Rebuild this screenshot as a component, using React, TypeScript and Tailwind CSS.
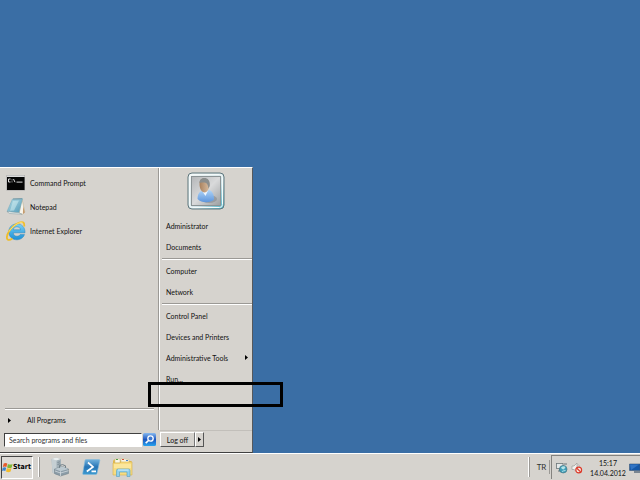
import { useState } from "react";

const places = [
  ["Administrator", "Documents"],
  ["Computer", "Network"],
  ["Control Panel", "Devices and Printers", "Administrative Tools", "Run..."],
];

function PromptIcon() {
  return (
    <svg className="h-5 w-5" viewBox="0 0 20 20">
      <rect x="0.5" y="2" width="18.5" height="15.5" fill="#a5a5a5" />
      <rect x="1" y="2.5" width="17.5" height="2" fill="#dcdcdc" />
      <rect x="1" y="4" width="17.5" height="13" fill="#050505" />
      <path d="M4.5 6H2.5v3h2M6 6.5v.8M6 8.500v.8M7.5 6l1.5 3.2M10.500 9.100h6" fill="none" stroke="#ddd" strokeWidth="1" />
    </svg>
  );
}

function NotepadIcon() {
  return (
    <svg className="h-5 w-5" viewBox="0 0 20 20">
      <defs>
        <linearGradient id="note" x1="0" y1="0" x2="1" y2="1">
          <stop offset="0" stopColor="#b9e0ea" />
          <stop offset="1" stopColor="#4d97b5" />
        </linearGradient>
      </defs>
      <path d="M16 2l2.8 13-2.6 2.5-3-1z" fill="#f7f4ec" stroke="#b4a683" strokeWidth="0.5" />
      <path d="M17.2 9l1.7 6.5-2 1.5z" fill="#c59a6c" />
      <path d="M6.5 2l10-.4-3.7 14.2L1 14.5z" fill="url(#note)" stroke="#6ba6ba" strokeWidth="0.5" />
      <path d="M1 14.5l11.8 1.3 3.3 1.4-12.5-.7z" fill="#e8f0f0" stroke="#81979c" strokeWidth="0.5" />
      <path d="M7 2l9-.3" stroke="#7c98a2" strokeWidth="1" />
      <path d="M7 4l6-.5-5 10-4 .2z" fill="#d8f1f4" opacity="0.5" />
    </svg>
  );
}

function ExplorerIcon() {
  return (
    <svg className="h-5 w-5" viewBox="0 0 20 20">
      <defs>
        <linearGradient id="ie" x1="0" y1="0" x2="0" y2="1">
          <stop offset="0" stopColor="#78d2f7" />
          <stop offset="1" stopColor="#1d8fd5" />
        </linearGradient>
      </defs>
      <path
        d="M19 11.8H7.2c.2 2.1 1.6 3.4 3.8 3.4 1.4 0 2.5-.5 3.200-1.600h4.300c-1.100 3.200-3.900 5.200-7.500 5.200-4.800 0-8.200-3.200-8.200-8S6.200 2.900 11 2.900c5 0 8.200 3.500 8 8.900zM7.300 8.800h7.200c-.2-1.800-1.600-3-3.600-3s-3.300 1.200-3.600 3z"
        fill="url(#ie)"
        stroke="#2385bd"
        strokeWidth="0.5"
      />
      <path
        d="M18.200 5.500c.3-2.200 0-3.600-1.200-4.200C14 0 7 4.400 3.400 9.700.6 14 0 18 2.200 18.800c1 .4 2.600-.1 4.200-1.200"
        fill="none"
        stroke="#efbd29"
        strokeWidth="1.800"
      />
      <path d="M16.500 1.300C12.500.900 6 5.700 3 10.600" fill="none" stroke="#ffe784" strokeWidth="0.800" />
    </svg>
  );
}

function Avatar() {
  return (
    <svg className="h-[38px] w-[38px]" viewBox="0 0 38 38">
      <defs>
        <linearGradient id="frame" x1="0" y1="0" x2="1" y2="1">
          <stop offset="0" stopColor="#f4f6f6" />
          <stop offset="0.6" stopColor="#d2e4e8" />
          <stop offset="1" stopColor="#49b3c8" />
        </linearGradient>
        <linearGradient id="back" x1="0" y1="0" x2="1" y2="1">
          <stop offset="0" stopColor="#b4b6b8" />
          <stop offset="0.5" stopColor="#d9dadb" />
          <stop offset="1" stopColor="#9c9fa1" />
        </linearGradient>
        <linearGradient id="shirt" x1="0" y1="0" x2="0" y2="1">
          <stop offset="0" stopColor="#b3d7f8" />
          <stop offset="1" stopColor="#5d95dc" />
        </linearGradient>
        <linearGradient id="face" x1="0" y1="0" x2="1" y2="0">
          <stop offset="0" stopColor="#a9815d" />
          <stop offset="1" stopColor="#d8bea2" />
        </linearGradient>
      </defs>
      <rect x="1" y="1" width="36" height="36" rx="4" fill="url(#frame)" stroke="#5f767c" strokeWidth="1" />
      <rect x="2.5" y="2.5" width="33" height="33" rx="3" fill="none" stroke="#f4fafa" strokeWidth="1" />
      <rect x="4.5" y="4.5" width="29" height="29" fill="url(#back)" stroke="#8b9395" strokeWidth="1" />
      <ellipse cx="22" cy="27" rx="8" ry="4" fill="#7c8187" opacity="0.5" />
      <path d="M10.500 27c0-5 2-8 6-9l5-.5c4 1.500 5.500 5 5.500 10-3 3.500-12.500 4-16.500-.5z" fill="url(#shirt)" />
      <path d="M14.500 18l4 6 3-6.500z" fill="#edf6ff" />
      <path d="M12.500 12c0-4 1.500-5.500 4.500-5.500s5.500 2 5.500 6-2 8-5 8-5-4-5-8.500z" fill="url(#face)" />
      <path d="M12.500 11c0-3.500 2-5 5-5s6 2.500 5.200 8l-1.200 2.500c-.5-3-1-4.500-2.500-5.500-2-.6-4-.4-6.500 0z" fill="#8b8e8d" />
    </svg>
  );
}

function SearchIcon() {
  return (
    <svg className="h-[13px] w-[13px]" viewBox="0 0 13 13">
      <defs>
        <linearGradient id="find" x1="0" y1="0" x2="0" y2="1">
          <stop offset="0" stopColor="#87b9ef" />
          <stop offset="0.5" stopColor="#1d56c0" />
          <stop offset="1" stopColor="#27a4ee" />
        </linearGradient>
      </defs>
      <rect width="13" height="13" rx="1.5" fill="url(#find)" />
      <circle cx="7.5" cy="5.5" r="2.7" fill="#3e78cf" stroke="#fff" strokeWidth="1.3" />
      <path d="M5.5 7.5L2.7 10.2" stroke="#fff" strokeWidth="1.7" />
    </svg>
  );
}

function WindowsLogo() {
  return (
    <svg className="h-[11px] w-[11px] shrink-0" viewBox="0 0 11 11">
      <path d="M1.7 1.6c1.3-.8 2.5-.8 3.6 0L4.400 5c-1.200-.7-2.400-.7-3.600 0z" fill="#e65b2b" />
      <path d="M5.900 2c1.500.8 2.900.8 4.700-.1L9.700 5.400c-1.500.9-3 .8-4.600 0z" fill="#80b637" />
      <path d="M.7 5.700c1.200-.7 2.400-.7 3.500 0L3.300 9C2.200 8.300 1.100 8.300 0 9z" fill="#3d83ca" />
      <path d="M4.900 6c1.500.8 3 .8 4.600 0L8.600 9.500c-1.500.9-3 .8-4.600 0z" fill="#f3bd2c" />
    </svg>
  );
}

function ServerIcon() {
  return (
    <svg className="h-5 w-5" viewBox="0 0 20 20">
      <path d="M1.500 2l4.500-1.500L11 2v14l-4.500 2-4-2.500z" fill="#a3b1b8" />
      <path d="M1.500 2l5 1.500V18l-4-2.500z" fill="#c5cfd3" />
      <path d="M1.500 2L6 .5 11 2 6.500 3.500z" fill="#eaeeee" />
      <path d="M7.500 5.500l2.500-.7M7.500 7.500l2.500-.7" stroke="#6b7d87" strokeWidth="0.7" />
      <path d="M4.500 12l8-2.500 6 2.500v4.500l-8 2.500-6-2.500z" fill="#8b9ca7" stroke="#687881" strokeWidth="0.5" />
      <path d="M4.500 12l8-2.500 6 2.500-8 2.300z" fill="#bcc9d0" />
      <path d="M9.500 10.800V8.500l3-.9 3 1.200v2" fill="none" stroke="#6d7d86" strokeWidth="1" />
      <path d="M5 14l5.500 2 8-2.300M10.500 14.300V19" fill="none" stroke="#dce3e6" strokeWidth="0.7" />
    </svg>
  );
}

function PowerShellIcon() {
  return (
    <svg className="h-5 w-5" viewBox="0 0 20 20">
      <defs>
        <linearGradient id="shell" x1="0" y1="0" x2="0" y2="1">
          <stop offset="0" stopColor="#72b2dd" />
          <stop offset="0.5" stopColor="#2674b5" />
          <stop offset="1" stopColor="#3d9bd1" />
        </linearGradient>
      </defs>
      <path d="M5 2.500h13q1 0 .8 1L16 16.500q-.3 1-1.300 1H2.500q-1 0-.8-1L4 3.500q.2-1 1-1z" fill="url(#shell)" stroke="#82b9da" strokeWidth="0.6" />
      <path d="M7 5.500l5 4.400-6.200 4.600M10.500 14.300H15" fill="none" stroke="#fff" strokeWidth="1.700" />
    </svg>
  );
}

function FolderIcon() {
  return (
    <svg className="h-[21px] w-[21px]" viewBox="0 0 21 21">
      <path d="M1 4l1-1.500h6L9 4h10.500v14H1z" fill="#e3b94a" />
      <path d="M3 2h5v4H3zM9 1.500l8 1V7H9z" fill="#faf7e8" stroke="#c9ba82" strokeWidth="0.5" />
      <path d="M4 2.500h2" stroke="#54a34b" strokeWidth="1.200" />
      <path d="M10 2.500h2" stroke="#d4543d" strokeWidth="1.200" />
      <path d="M14 3.500h2" stroke="#4984cb" strokeWidth="1.200" />
      <path d="M1 6h7l1-1h11v13H1z" fill="#f7dc82" stroke="#d9b34b" strokeWidth="0.6" />
      <path d="M2 8h17M2 10h17" stroke="#fff1b5" strokeWidth="1" />
      <path d="M4.500 19.500v-6q0-1.500 1.500-1.500h10.500q1.500 0 1.500 1.500v6h-3V15H7.500v4.500z" fill="#91d0ec" stroke="#539fc2" strokeWidth="0.6" />
      <path d="M6 13h10.500" stroke="#d5effb" strokeWidth="1" />
    </svg>
  );
}

function NetworkTrayIcon() {
  return (
    <svg className="h-3 w-3" viewBox="0 0 12 12">
      <rect x="0.5" y="1.5" width="6.5" height="5" fill="#e5e9e9" stroke="#6d7578" strokeWidth="0.8" />
      <path d="M2 9h4M3.500 7v2M8 2h3" stroke="#6d7578" strokeWidth="1" />
      <circle cx="7.2" cy="7.2" r="3.8" fill="#3f9fba" stroke="#47717c" strokeWidth="0.6" />
      <path d="M5 5.500q2.500-2 4.500-.5L8 7.500 6 7z" fill="#b5e4e7" />
      <path d="M6 9.500q2-1 3.500-1" stroke="#d0edf0" strokeWidth="0.8" fill="none" />
    </svg>
  );
}

function SoundTrayIcon() {
  return (
    <svg className="h-3 w-3" viewBox="0 0 12 12">
      <path d="M1 4h2l3-3v9L3 7.500H1z" fill="#f1f1ef" stroke="#999b9a" strokeWidth="0.7" />
      <path d="M7.500 2.500q1 1 1 2" fill="none" stroke="#a3a5a4" strokeWidth="0.7" />
      <circle cx="7.700" cy="8" r="2.900" fill="#f7e8e2" stroke="#dc3828" strokeWidth="1.200" />
      <path d="M5.800 6.200l3.800 3.700" stroke="#dc3828" strokeWidth="1.200" />
    </svg>
  );
}

function ScreenTrayIcon() {
  return (
    <svg className="h-[11px] w-[11px] shrink-0" viewBox="0 0 11 11">
      <path d="M.5 2h10.500v6.500H.5z" fill="#1558a8" stroke="#3a5878" strokeWidth="0.6" />
      <path d="M1 2.500h9L2 8z" fill="#3174c4" />
      <path d="M5 10h6" stroke="#3b5269" strokeWidth="1.200" />
    </svg>
  );
}

function Arrow() {
  return (
    <svg className="h-[5px] w-[3px]" viewBox="0 0 3 5">
      <path d="M0 0l3 2.500L0 5z" fill="#000" />
    </svg>
  );
}

const programs = [
  { name: "Command Prompt", icon: <PromptIcon /> },
  { name: "Notepad", icon: <NotepadIcon /> },
  { name: "Internet Explorer", icon: <ExplorerIcon /> },
];

const quickLaunch = [
  { name: "Server Manager", icon: <ServerIcon /> },
  { name: "Windows PowerShell", icon: <PowerShellIcon /> },
  { name: "Windows Explorer", icon: <FolderIcon /> },
];

export default function App() {
  const [query, setQuery] = useState("");

  return (
    <div className="flex min-h-screen flex-col bg-[#3a6ea5] font-['Lato','DejaVu_Sans_Condensed',sans-serif] text-[7px] leading-[10px] text-[#111]">
      <main className="flex flex-1 items-end">
        {/* Start menu */}
        <div className="relative w-[253px] border-t border-r border-b border-t-white border-r-[#55585c] border-b-[#404040] bg-[#d6d3ce]">
          <div className="flex">
            <div className="flex w-[159px] flex-col border-r border-[#9b9995] pt-[3px]">
              {programs.map((program) => (
                <button key={program.name} className="flex h-6 items-center gap-1 pl-[6px] text-left">
                  {program.icon}
                  {program.name}
                </button>
              ))}
              <div className="mt-auto mr-1 ml-[5px] border-t border-b border-t-[#9b9995] border-b-white" />
              <button className="flex h-5 items-center gap-4 pl-2 text-left">
                <Arrow />
                All Programs
              </button>
            </div>

            <nav className="flex flex-1 flex-col border-l border-white pb-[41px]">
              <div className="flex h-[47px] justify-center pt-1">
                <Avatar />
              </div>
              {places.map((group, index) => (
                <div key={index}>
                  {index > 0 && (
                    <div className="mt-px ml-[2px] border-t border-b border-t-[#9b9995] border-b-white" />
                  )}
                  {group.map((place) => (
                    <button key={place} className="flex h-[21px] w-full items-center justify-between pr-1 pl-[6px] text-left">
                      {place}
                      {place === "Administrative Tools" && <Arrow />}
                    </button>
                  ))}
                </div>
              ))}
            </nav>
          </div>

          <div className="flex items-start pb-[5px] pl-1">
            <form className="flex w-[156px] items-start gap-px pt-[3px]" onSubmit={(e) => e.preventDefault()}>
              <input
                type="text"
                aria-label="Search programs and files"
                placeholder="Search programs and files"
                value={query}
                onChange={(e) => setQuery(e.target.value)}
                className="h-[14px] w-[138px] border border-t-[#404040] border-r-white border-b-white border-l-[#404040] bg-white px-1 outline-none placeholder:text-[#333]"
              />
              <button aria-label="Search">
                <SearchIcon />
              </button>
            </form>
            <div className="flex flex-1 border-t border-[#c2bfba] pt-px">
              <button className="h-[15px] w-[35px] border border-t-white border-r-[#777] border-b-[#555] border-l-white">
                Log off
              </button>
              <button
                aria-label="Shut down options"
                className="flex h-[15px] w-[9px] items-center justify-center border border-t-white border-r-[#555] border-b-[#555] border-l-white"
              >
                <Arrow />
              </button>
            </div>
          </div>

          {/* Highlight around the spot below Run */}
          <div className="absolute top-[214px] left-[148px] h-[25px] w-[135px] border-[3px] border-black" />
        </div>
      </main>

      <footer className="flex h-[27px] items-center border-t border-white bg-[#d6d3ce]">
        <button className="ml-px flex h-[23px] w-8 items-center border border-t-[#444] border-r-white border-b-white border-l-[#444] bg-[#dedbd7] font-['DejaVu_Sans_Condensed','DejaVu_Sans',sans-serif] font-bold text-black">
          <WindowsLogo />
          Start
        </button>
        <div className="ml-[5px] h-5 w-[2px] border-r border-l border-r-[#9b9995] border-l-white" />
        <div className="ml-[10px] flex items-center gap-[11px]">
          {quickLaunch.map((app) => (
            <button key={app.name} aria-label={app.name}>
              {app.icon}
            </button>
          ))}
        </div>

        <div className="ml-auto flex items-center">
          <div className="h-5 w-[2px] border-r border-l border-r-[#9b9995] border-l-white" />
          <span className="w-[19px] pl-1 text-center text-[8px] text-[#333]">TR</span>
          <div className="h-[14px] w-px bg-[#9b9995]" />
          <div className="ml-px flex h-6 w-[89px] items-center border-t border-l border-[#85837f] pl-1">
            <NetworkTrayIcon />
            <span className="ml-[3px]">
              <SoundTrayIcon />
            </span>
            <time className="flex-1 pl-1 text-center">
              15:17
              <br />
              14.04.2012
            </time>
            <ScreenTrayIcon />
          </div>
        </div>
      </footer>
    </div>
  );
}
